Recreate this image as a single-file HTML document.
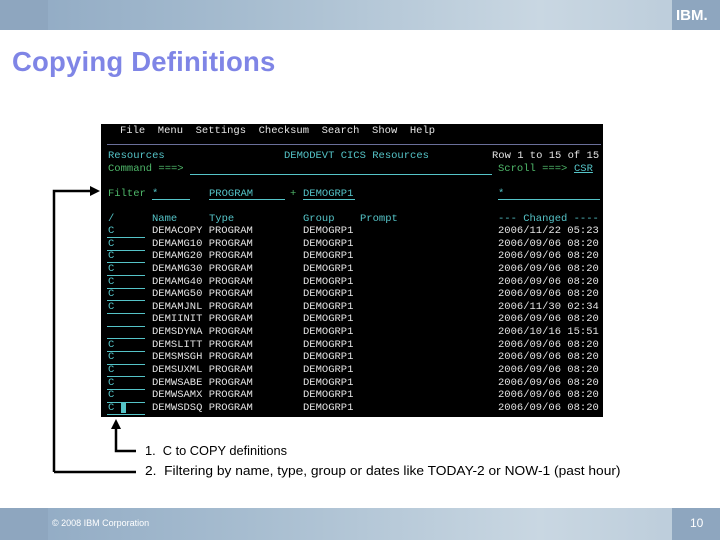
<!DOCTYPE html>
<html><head><meta charset="utf-8"><style>
*{margin:0;padding:0}
body{width:720px;height:540px;position:relative;overflow:hidden;background:#fff;font-family:"Liberation Sans",sans-serif}
.bar{position:absolute;left:0;width:720px;background:linear-gradient(90deg,#8fa9c3 0%,#a7bdd0 35%,#c9d7e2 75%,#b9cad9 100%)}
.blk{position:absolute;background:#8ea6bf}
#term{position:absolute;left:101px;top:124px;width:502px;height:293px;background:#000;font-family:"Liberation Mono",monospace;font-size:10.5px;line-height:12px}
#term div{position:absolute;white-space:pre}
.w{color:#e4e4e4}.c{color:#55c4c8}.g{color:#4fb86a}
.u{position:absolute;height:1px;background:#55c4c8}
</style></head><body>
<div class="bar" style="top:0;height:30px"></div>
<div class="blk" style="left:0;top:0;width:48px;height:30px"></div>
<div class="blk" style="left:672px;top:0;width:48px;height:30px"></div>
<div style="position:absolute;left:676px;top:7px;color:#fff;font:bold 15px 'Liberation Sans',sans-serif">IBM.</div>
<div style="position:absolute;left:12px;top:46px;color:#7f85e6;font-size:27.5px;font-weight:bold;letter-spacing:0.2px">Copying Definitions</div>

<div id="term">
<div class="w" style="left:19px;top:1px">File  Menu  Settings  Checksum  Search  Show  Help</div>
<div class="u" style="left:6px;top:20px;width:494px;background:#6a6f9a"></div>
<div class="c" style="left:7px;top:26px">Resources</div>
<div class="c" style="left:183px;top:26px">DEMODEVT CICS Resources</div>
<div class="w" style="left:391px;top:26px">Row 1 to 15 of 15</div>
<div class="g" style="left:7px;top:39px">Command ===&gt;</div>
<div class="u" style="left:89px;top:50px;width:302px"></div>
<div class="g" style="left:397px;top:39px">Scroll ===&gt;</div>
<div class="c" style="left:473px;top:39px;text-decoration:underline">CSR</div>
<div class="g" style="left:7px;top:64px">Filter</div>
<div class="c" style="left:51px;top:64px">*</div><div class="u" style="left:51px;top:75px;width:38px"></div>
<div class="c" style="left:108px;top:64px">PROGRAM</div><div class="u" style="left:108px;top:75px;width:76px"></div>
<div class="g" style="left:189px;top:64px">+</div>
<div class="c" style="left:202px;top:64px">DEMOGRP1</div><div class="u" style="left:202px;top:75px;width:52px"></div>
<div class="c" style="left:397px;top:64px">*</div><div class="u" style="left:397px;top:75px;width:102px"></div>
<div class="c" style="left:7px;top:89px">/</div>
<div class="c" style="left:51px;top:89px">Name</div>
<div class="c" style="left:108px;top:89px">Type</div>
<div class="c" style="left:202px;top:89px">Group</div>
<div class="c" style="left:259px;top:89px">Prompt</div>
<div class="c" style="left:397px;top:89px">--- Changed ----</div>

<div class="w" style="left:51px;top:101px;line-height:12.64px">DEMACOPY PROGRAM<br>DEMAMG10 PROGRAM<br>DEMAMG20 PROGRAM<br>DEMAMG30 PROGRAM<br>DEMAMG40 PROGRAM<br>DEMAMG50 PROGRAM<br>DEMAMJNL PROGRAM<br>DEMIINIT PROGRAM<br>DEMSDYNA PROGRAM<br>DEMSLITT PROGRAM<br>DEMSMSGH PROGRAM<br>DEMSUXML PROGRAM<br>DEMWSABE PROGRAM<br>DEMWSAMX PROGRAM<br>DEMWSDSQ PROGRAM</div>
<div class="w" style="left:202px;top:101px;line-height:12.64px">DEMOGRP1<br>DEMOGRP1<br>DEMOGRP1<br>DEMOGRP1<br>DEMOGRP1<br>DEMOGRP1<br>DEMOGRP1<br>DEMOGRP1<br>DEMOGRP1<br>DEMOGRP1<br>DEMOGRP1<br>DEMOGRP1<br>DEMOGRP1<br>DEMOGRP1<br>DEMOGRP1</div>
<div class="w" style="left:397px;top:101px;line-height:12.64px">2006/11/22 05:23<br>2006/09/06 08:20<br>2006/09/06 08:20<br>2006/09/06 08:20<br>2006/09/06 08:20<br>2006/09/06 08:20<br>2006/11/30 02:34<br>2006/09/06 08:20<br>2006/10/16 15:51<br>2006/09/06 08:20<br>2006/09/06 08:20<br>2006/09/06 08:20<br>2006/09/06 08:20<br>2006/09/06 08:20<br>2006/09/06 08:20</div>
<div class="c" style="left:7px;top:101px;line-height:12.64px">C<br>C<br>C<br>C<br>C<br>C<br>C<br> <br> <br>C<br>C<br>C<br>C<br>C<br>C</div>
<div class="u" style="left:6px;top:113px;width:38px"></div>
<div class="u" style="left:6px;top:126px;width:38px"></div>
<div class="u" style="left:6px;top:138px;width:38px"></div>
<div class="u" style="left:6px;top:151px;width:38px"></div>
<div class="u" style="left:6px;top:164px;width:38px"></div>
<div class="u" style="left:6px;top:176px;width:38px"></div>
<div class="u" style="left:6px;top:189px;width:38px"></div>
<div class="u" style="left:6px;top:202px;width:38px"></div>
<div class="u" style="left:6px;top:214px;width:38px"></div>
<div class="u" style="left:6px;top:227px;width:38px"></div>
<div class="u" style="left:6px;top:240px;width:38px"></div>
<div class="u" style="left:6px;top:252px;width:38px"></div>
<div class="u" style="left:6px;top:265px;width:38px"></div>
<div class="u" style="left:6px;top:278px;width:38px"></div>
<div class="u" style="left:6px;top:290px;width:38px"></div>
<div style="left:20px;top:279px;width:5px;height:10px;background:#55c4c8"></div>
</div>

<svg style="position:absolute;left:0;top:0" width="720" height="540">
<g fill="none" stroke="#000" stroke-width="2.5">
<path d="M54 472 V191 H92"/>
<path d="M54 472 H136"/>
<path d="M116 428 V451 H136"/>
</g>
<polygon points="100,191 90,186 90,196" fill="#000"/>
<polygon points="116,419 111,429 121,429" fill="#000"/>
</svg>
<div style="position:absolute;left:145px;top:443px;font-size:13.2px;color:#000;transform:scaleX(0.97);transform-origin:left;white-space:nowrap">1.&nbsp; C to COPY definitions</div>
<div style="position:absolute;left:145px;top:463px;font-size:13.2px;color:#000;transform:scaleX(1.043);transform-origin:left;white-space:nowrap">2.&nbsp; Filtering by name, type, group or dates like TODAY-2 or NOW-1 (past hour)</div>

<div class="bar" style="top:508px;height:32px"></div>
<div class="blk" style="left:0;top:508px;width:48px;height:32px"></div>
<div class="blk" style="left:672px;top:508px;width:48px;height:32px"></div>
<div style="position:absolute;left:52px;top:518px;font-size:9px;color:#fff">© 2008 IBM Corporation</div>
<div style="position:absolute;left:690px;top:516px;font-size:12px;color:#fff">10</div>
</body></html>
